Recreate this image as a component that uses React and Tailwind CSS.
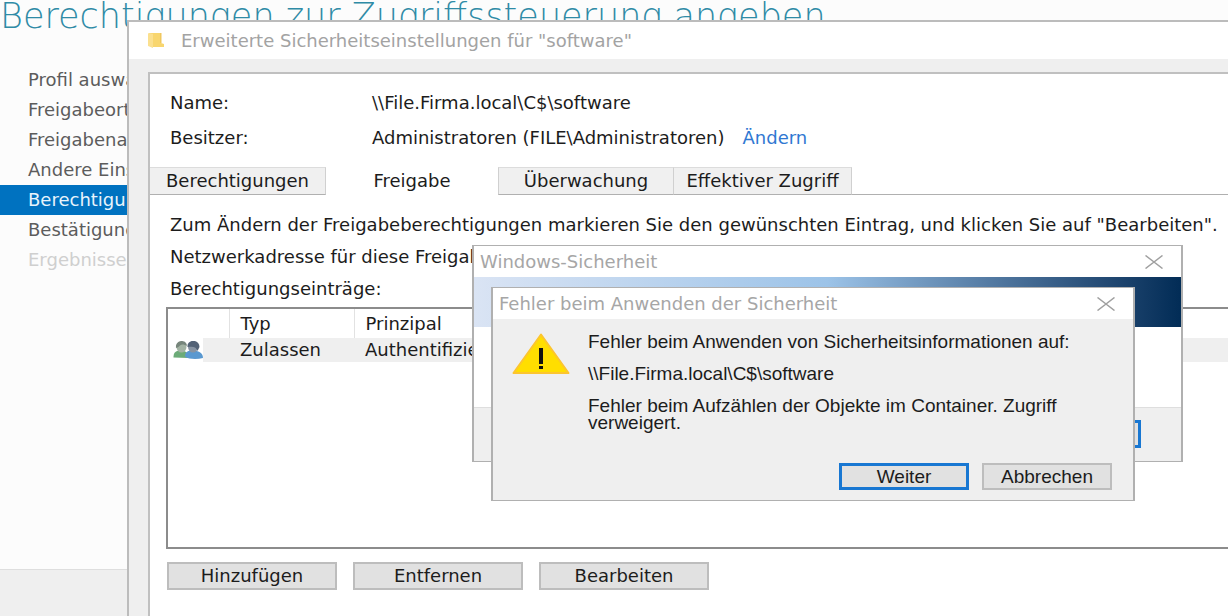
const uiFont = "font-['DejaVu_Sans',Verdana,sans-serif]";

const steps = [
  { label: "Profil auswählen" },
  { label: "Freigabeort" },
  { label: "Freigabename" },
  { label: "Andere Einstellungen" },
  { label: "Berechtigungen", state: "current" },
  { label: "Bestätigung" },
  { label: "Ergebnisse", state: "disabled" },
];

const stepStyles = {
  current: "bg-[#0072c0] text-[#e8f4fc]",
  disabled: "text-[#cfcfcf]",
  normal: "text-[#5c5c5c]",
};

function FolderIcon() {
  return (
    <svg viewBox="0 0 18 16" className="h-4 w-[18px] shrink-0" aria-hidden="true">
      <path d="M2 0h12v10l3 1v3H4z" fill="#f8d66f" />
      <path d="M1 1q0-1 1-1l4 1v14l-5-2z" fill="#fbe08f" />
      <path d="M13 0h1.500v10H13z" fill="#f0c75f" />
    </svg>
  );
}

function UsersIcon() {
  return (
    <svg viewBox="0 0 30 18" className="h-[18px] w-[30px]" aria-hidden="true">
      <path d="M0.500 16.500c0-5 2-7 7-7s8 2 8 7.500z" fill="#6cab78" />
      <ellipse cx="8.500" cy="6" rx="5" ry="5.500" fill="#a3b3a4" />
      <path d="M3 7c-1-9 11-9 11-2-3-1.500-5-2-7-.5-1 1-2 2-4 2.500z" fill="#76857b" />
      <path d="M12 15.500c0-5 3-6 8-6s10 2 10 7.500c-6 1.500-14 1.500-18-1.500z" fill="#5998d0" />
      <ellipse cx="20" cy="6" rx="5" ry="5.500" fill="#8793a2" />
      <path d="M14.500 6c-1-8 12-8.500 12 0l-2 4c-1-4-4-5-10-4z" fill="#536276" />
    </svg>
  );
}

function WarningIcon() {
  return (
    <svg viewBox="0 0 58 42" className="h-[42px] w-[58px] shrink-0" aria-hidden="true">
      <path d="M29 1.500L56.500 40H1.500z" fill="#ffde00" stroke="#fcc52f" strokeWidth="2" strokeLinejoin="round" />
      <path d="M27 15h4v16h-4zM27 33h4v3h-4z" fill="#111" />
    </svg>
  );
}

function CloseButton() {
  return (
    <button type="button" aria-label="Schließen" className="flex h-full w-[54px] items-center justify-center">
      <svg viewBox="0 0 18 14" className="h-3.5 w-[18px]" aria-hidden="true">
        <path d="M0.500 0.500L17.500 13.500M17.500 0.500L0.500 13.500" stroke="#a0a0a0" strokeWidth="1.500" fill="none" />
      </svg>
    </button>
  );
}

function Tab({ children, active, className }) {
  return (
    <button
      type="button"
      role="tab"
      aria-selected={!!active}
      className={
        (active
          ? "bg-white "
          : "border-t border-r border-b border-t-[#dcdcdc] border-r-[#d0d0d0] border-b-[#b0b0b0] bg-[#f0f0f0] ") +
        "flex items-center justify-center " +
        className
      }
    >
      {children}
    </button>
  );
}

function ActionButton({ children }) {
  return (
    <button type="button" className="h-7 w-[170px] border-2 border-[#bdbdbd] bg-[#e1e1e1] leading-6">
      {children}
    </button>
  );
}

function SecuritySettings() {
  return (
    <section
      aria-label="Erweiterte Sicherheitseinstellungen"
      className="absolute top-5 right-0 bottom-0 left-[127px] flex flex-col overflow-hidden border-t-2 border-l-2 border-[#bcbcbc] bg-[#efefef] text-lg whitespace-nowrap text-[#1c1c1c]"
    >
      <header className="flex h-[37px] shrink-0 items-center gap-4 bg-white pl-[18px] text-[#a3a3a3]">
        <FolderIcon />
        <h2>Erweiterte Sicherheitseinstellungen für "software"</h2>
      </header>
      <div className="mt-[13px] ml-[19px] flex flex-1 flex-col border-t-2 border-l-2 border-[#c0c0c0] bg-white">
        <dl className="grid grid-cols-[202px_auto] gap-y-[11px] pt-[17px] pb-[17px] pl-5 leading-6">
          <dt>Name:</dt>
          <dd>\\File.Firma.local\C$\software</dd>
          <dt>Besitzer:</dt>
          <dd className="flex gap-[18px]">
            Administratoren (FILE\Administratoren)
            <a href="#owner" className="text-[#2f78d2]">Ändern</a>
          </dd>
        </dl>
        <div role="tablist" className="flex h-7 shrink-0">
          <Tab className="w-[176px]">Berechtigungen</Tab>
          <Tab active className="w-[172px]">Freigabe</Tab>
          <Tab className="w-[176px] border-l border-l-[#d0d0d0]">Überwachung</Tab>
          <Tab className="w-[178px]">Effektiver Zugriff</Tab>
          <div className="flex-1 border-b border-[#b0b0b0]" />
        </div>
        <div className="flex flex-1 flex-col pt-[18px] pb-[26px] pl-4">
          <div className="flex flex-col gap-2 pl-1 leading-6">
            <p>Zum Ändern der Freigabeberechtigungen markieren Sie den gewünschten Eintrag, und klicken Sie auf "Bearbeiten".</p>
            <p>Netzwerkadresse für diese Freigabe:</p>
            <h3>Berechtigungseinträge:</h3>
          </div>
          <div className="mt-1.5 min-h-40 flex-1 border-y-2 border-l-2 border-[#8c8c8c]">
            <table className="w-full table-fixed border-collapse text-left">
              <colgroup>
                <col className="w-[35px]" />
                <col className="w-[26px]" />
                <col className="w-[125px]" />
                <col />
              </colgroup>
              <thead>
                <tr className="h-[29px]">
                  <th colSpan={2} className="border-r border-[#e2e2e2]" aria-label="Symbol" />
                  <th className="border-r border-[#e2e2e2] pl-[11px] font-normal">Typ</th>
                  <th className="pl-[11px] font-normal">Prinzipal</th>
                </tr>
              </thead>
              <tbody>
                <tr className="h-6 bg-[#efefef]">
                  <td className="bg-white pl-[5px]"><UsersIcon /></td>
                  <td />
                  <td className="pl-[11px] leading-6">Zulassen</td>
                  <td className="pl-[11px] leading-6">Authentifizierte Benutzer</td>
                </tr>
              </tbody>
            </table>
          </div>
          <div className="mt-[13px] flex gap-4 pl-px">
            <ActionButton>Hinzufügen</ActionButton>
            <ActionButton>Entfernen</ActionButton>
            <ActionButton>Bearbeiten</ActionButton>
          </div>
        </div>
      </div>
    </section>
  );
}

function CredentialDialog() {
  return (
    <section
      role="dialog"
      aria-label="Windows-Sicherheit"
      className="absolute top-[245px] left-[472px] flex w-[711px] flex-col border-x-2 border-y border-[#b0b0b0] bg-white"
    >
      <header className="flex h-[31px] items-center justify-between pl-1.5 text-lg text-[#a6a6a6]">
        <h2>Windows-Sicherheit</h2>
        <CloseButton />
      </header>
      <div className="h-[50px] bg-linear-to-r from-[#dae4f4] via-[#9cc3e8] to-[#022c56]" />
      <div className="h-20" />
      <footer className="flex h-[54px] justify-end border-t border-[#dedede] bg-[#efefef] pt-3 pr-10">
        <button type="button" aria-label="OK" className="h-7 w-32 border-[3px] border-[#1877d2] bg-[#e1e1e1]" />
      </footer>
    </section>
  );
}

function ErrorDialog() {
  return (
    <section
      role="alertdialog"
      aria-label="Fehler beim Anwenden der Sicherheit"
      className="absolute top-[287px] left-[491px] w-[644px] border-x-2 border-y border-[#b0b0b0] bg-[#efefef] text-[#1c1c1c]"
    >
      <header className="flex h-[31px] items-center justify-between bg-white pl-1.5 text-lg text-[#a6a6a6]">
        <h2>Fehler beim Anwenden der Sicherheit</h2>
        <CloseButton />
      </header>
      <div className="font-['Liberation_Sans',Arial,sans-serif] text-[19px] leading-[17px]">
        <div className="flex h-36 gap-[18px] pt-3.5 pl-[19px]">
          <WarningIcon />
          <div className="flex flex-col gap-[15px] whitespace-nowrap">
            <p>Fehler beim Anwenden von Sicherheitsinformationen auf:</p>
            <p>\\File.Firma.local\C$\software</p>
            <p>Fehler beim Aufzählen der Objekte im Container. Zugriff<br />verweigert.</p>
          </div>
        </div>
        <div className="flex justify-end gap-[13px] pr-[21px] pb-[10px]">
          <button type="button" className="h-[27px] w-[130px] border-[3px] border-[#1877d2] bg-[#e1e1e1]">Weiter</button>
          <button type="button" className="h-[27px] w-[130px] border-2 border-[#bdbdbd] bg-[#e1e1e1]">Abbrechen</button>
        </div>
      </div>
    </section>
  );
}

export default function App() {
  return (
    <main className={"relative flex min-h-screen flex-col overflow-hidden bg-[#fcfcfc] " + uiFont}>
      <h1 className="h-[65px] text-[35px] leading-8 font-extralight whitespace-nowrap text-[#2f8ba6]">
        Berechtigungen zur Zugriffssteuerung angeben
      </h1>
      <nav aria-label="Schritte" className="w-64 flex-1">
        <ol className="text-lg leading-[30px]">
          {steps.map(({ label, state }) => (
            <li key={label} className={"pl-7 whitespace-nowrap " + stepStyles[state || "normal"]}>
              {label}
            </li>
          ))}
        </ol>
      </nav>
      <footer className="h-[47px] border-t border-[#dedede] bg-[#efefef]" />
      <SecuritySettings />
      <CredentialDialog />
      <ErrorDialog />
    </main>
  );
}
